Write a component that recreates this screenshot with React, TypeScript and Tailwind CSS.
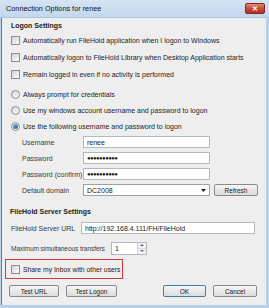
import React from "react";

const Check = () => (
  <span className="inline-block w-[9px] h-[9px] border border-[#8e8f8f] bg-linear-to-br from-[#d6d6d6] to-[#fafafa] shrink-0" />
);

const Radio = ({ on = false }: { on?: boolean }) => (
  <span className="w-[9px] h-[9px] rounded-full border border-[#8e8f8f] bg-linear-to-br from-[#d8d8d8] to-[#fafafa] shrink-0 flex items-center justify-center">
    {on && <span className="w-[5px] h-[5px] rounded-full bg-linear-to-br from-[#6fb3ea] to-[#1c5a9c]" />}
  </span>
);

const Btn = ({ label, def = false, w }: { label: string; def?: boolean; w: string }) => (
  <div
    className={`${w} h-[12px] rounded-[2px] border ${def ? "border-[#3c7fb1]" : "border-[#8a8a8a]"} bg-linear-to-b from-[#f6f6f6] to-[#dcdcdc] flex items-center justify-center text-[6.5px] text-[#1a1a1a]`}
  >
    {label}
  </div>
);

const Field = ({ label, children }: { label: string; children: React.ReactNode }) => (
  <div className="h-[16px] flex items-center">
    <div className="w-[73px] pl-[12px] text-[#3a3a3a]">{label}</div>
    {children}
  </div>
);

export default function App() {
  return (
    <div
      className="w-[269px] h-[308px] flex flex-col bg-[#b9d2ec] text-[7px] leading-[9px] text-[#222] whitespace-nowrap"
      style={{ fontFamily: '"Liberation Sans", Arial, sans-serif' }}
    >
      {/* Title bar */}
      <div className="h-[18px] flex items-center justify-between pl-[6px] pr-[4px] bg-linear-to-b from-[#d6e4f4] to-[#c3d7ee] border-b border-[#aec4de]">
        <span className="text-[7.3px] text-[#111]">Connection Options for renee</span>
        <div className="w-[20px] h-[11px] rounded-[2px] border border-[#7a2a22] bg-linear-to-b from-[#e4877a] via-[#c84a38] to-[#b8311f] flex items-center justify-center text-white text-[7px] font-bold leading-none">
          ✕
        </div>
      </div>

      {/* Content */}
      <div className="flex-1 flex flex-col ml-[1px] mr-[3px] mb-[3px] border-l border-[#7a7a7a] bg-[#eeeeee] pl-[8px]">
        <div className="h-[14px] flex items-center pl-[1px] font-bold text-[#222]">Logon Settings</div>
        <div className="h-[17px] flex items-center gap-[3px] pl-[1px]">
          <Check />
          <span>Automatically run FileHold application when I logon to Windows</span>
        </div>
        <div className="h-[17px] flex items-center gap-[3px] pl-[1px]">
          <Check />
          <span>Automatically logon to FileHold Library when Desktop Application starts</span>
        </div>
        <div className="h-[17px] flex items-center gap-[3px] pl-[1px]">
          <Check />
          <span>Remain logged in even if no activity is performed</span>
        </div>

        <div className="h-[3px]" />
        <div className="h-[16px] flex items-center gap-[3px] pl-[1px]">
          <Radio />
          <span>Always prompt for credentials</span>
        </div>
        <div className="h-[16px] flex items-center gap-[3px] pl-[1px]">
          <Radio />
          <span>Use my windows account username and password to logon</span>
        </div>
        <div className="h-[16px] flex items-center gap-[3px] pl-[1px]">
          <Radio on />
          <span>Use the following username and password to logon</span>
        </div>

        <Field label="Username">
          <div className="w-[127px] h-[12px] border border-[#b4b7bd] bg-white flex items-center pl-[3px]">renee</div>
        </Field>
        <Field label="Password">
          <div className="w-[127px] h-[12px] border border-[#b4b7bd] bg-white flex items-center pl-[3px] text-[6px] tracking-[-0.6px]">
            ●●●●●●●●●●
          </div>
        </Field>
        <Field label="Password (confirm)">
          <div className="w-[127px] h-[12px] border border-[#b4b7bd] bg-white flex items-center pl-[3px] text-[6px] tracking-[-0.6px]">
            ●●●●●●●●●●
          </div>
        </Field>
        <Field label="Default domain">
          <div className="w-[127px] h-[12px] border border-[#a0a0a0] bg-white flex items-center justify-between pl-[3px] pr-[3px]">
            <span>DC2008</span>
            <svg width="5" height="3" viewBox="0 0 5 3">
              <path d="M0 0 H5 L2.5 3 Z" fill="#222" />
            </svg>
          </div>
          <div className="ml-[4px]">
            <Btn label="Refresh" w="w-[44px]" />
          </div>
        </Field>

        <div className="h-[4px]" />
        <div className="h-[18px] flex items-center font-bold">FileHold Server Settings</div>
        <div className="h-[16px] flex items-center pl-[1px]">
          <span className="w-[70px] text-[#3a3a3a]">FileHold Server URL</span>
          <div className="w-[174px] h-[12px] border border-[#b4b7bd] bg-white flex items-center pl-[3px]">
            http://192.168.4.111/FH/FileHold
          </div>
        </div>
        <div className="h-[4px]" />
        <div className="h-[16px] flex items-center pl-[1px]">
          <span className="w-[100px] text-[#3a3a3a] text-[6.6px] tracking-[-0.1px]">Maximum simultaneous transfers</span>
          <div className="w-[36px] h-[13px] border border-[#b4b7bd] bg-white flex items-center justify-between pl-[3px]">
            <span>1</span>
            <div className="w-[9px] h-full border-l border-[#cfcfcf] flex flex-col bg-[#f2f2f2]">
              <div className="flex-1 flex items-center justify-center border-b border-[#d8d8d8]">
                <svg width="4" height="2" viewBox="0 0 4 2"><path d="M0 2 L2 0 L4 2 Z" fill="#4b6e9a" /></svg>
              </div>
              <div className="flex-1 flex items-center justify-center">
                <svg width="4" height="2" viewBox="0 0 4 2"><path d="M0 0 L4 0 L2 2 Z" fill="#4b6e9a" /></svg>
              </div>
            </div>
          </div>
        </div>

        <div className="h-[3px]" />
        <div className="ml-[-5px] w-[118px] h-[20px] border-[1.5px] border-[#d03a3a] flex items-center gap-[3px] pl-[5px]">
          <Check />
          <span className="text-[6.8px]">Share my Inbox with other users</span>
        </div>

        <div className="h-[6px]" />
        <div className="flex items-center">
          <div className="ml-[-1px]">
            <Btn label="Test URL" w="w-[50px]" />
          </div>
          <div className="ml-[7px]">
            <Btn label="Test Logon" w="w-[51px]" />
          </div>
          <div className="ml-[46px]">
            <Btn label="OK" def w="w-[43px]" />
          </div>
          <div className="ml-[7px]">
            <Btn label="Cancel" w="w-[44px]" />
          </div>
        </div>
      </div>
    </div>
  );
}
